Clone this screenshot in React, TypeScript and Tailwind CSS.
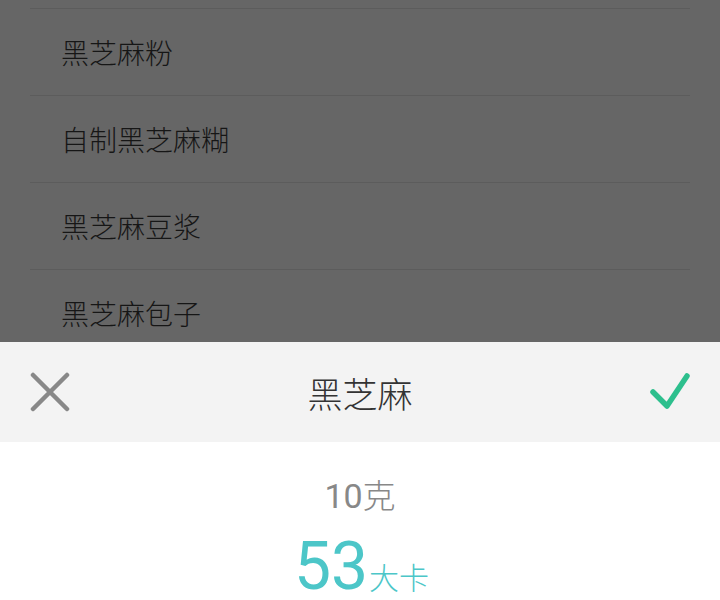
import React from "react";

const cjk = { fontFamily: '"Noto Sans CJK SC", "Noto Sans", sans-serif' };
const num = { fontFamily: 'Roboto, "Noto Sans CJK SC", sans-serif' };

const items = ["黑芝麻粉", "自制黑芝麻糊", "黑芝麻豆浆", "黑芝麻包子", "黑芝麻糊"];

export default function App() {
  return (
    <div className="w-[720px] h-[600px] overflow-hidden flex flex-col bg-white font-light" style={cjk}>
      <div className="h-[342px] overflow-hidden bg-[#666666] flex flex-col">
        <div className="h-[8px] shrink-0" />
        {items.map((t) => (
          <div key={t} className="mx-[30px] border-t border-[#5c5c5c] h-[87px] shrink-0 flex items-center pl-[31px]">
            <span className="text-[28px] leading-none text-[#161616]">{t}</span>
          </div>
        ))}
      </div>
      <div className="h-[100px] bg-[#f3f3f3] grid grid-cols-[1fr_auto_1fr] items-center px-[30px]">
        <div className="flex">
          <svg width="40" height="40" viewBox="0 0 40 40">
            <path d="M3 3 L37 37 M37 3 L3 37" stroke="#888888" strokeWidth="4.5" strokeLinecap="round" fill="none" />
          </svg>
        </div>
        <div className="text-[35px] leading-none text-[#333333]">黑芝麻</div>
        <div className="flex justify-end">
          <svg width="40" height="40" viewBox="0 0 40 40">
            <path d="M3 20 L17 34 L37 4" stroke="#2dbf8d" strokeWidth="5.5" strokeLinecap="round" strokeLinejoin="round" fill="none" />
          </svg>
        </div>
      </div>
      <div className="flex-1 flex flex-col items-center pt-[36px]">
        <div className="h-[34px] text-[34px] leading-none text-[#888888] flex items-baseline">
          <span style={num} className="font-normal">10</span>
          <span style={cjk} className="text-[33px] leading-none">克</span>
        </div>
        <div className="mt-[22px] text-[66px] leading-none text-[#4cc6c8] flex items-baseline pl-[3px]">
          <span style={num} className="font-normal">53</span>
          <span style={cjk} className="text-[30px] leading-none ml-[1px]">大卡</span>
        </div>
      </div>
    </div>
  );
}
